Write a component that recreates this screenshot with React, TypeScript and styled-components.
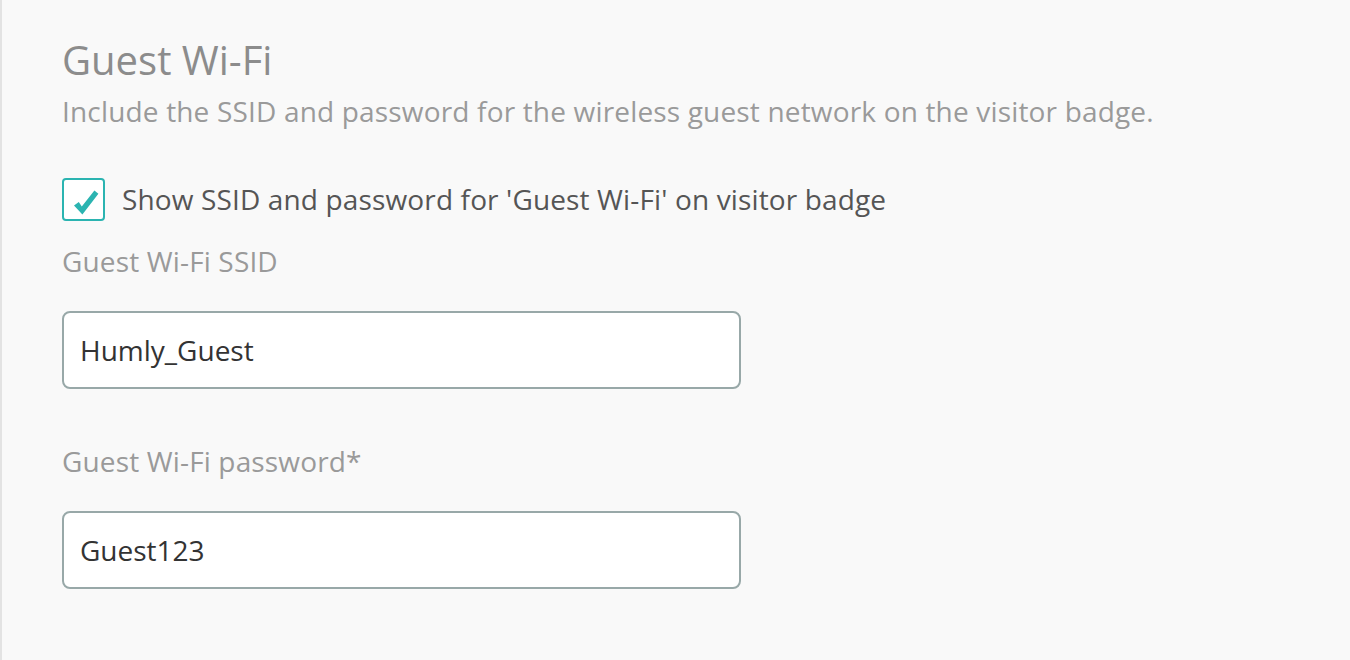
import React from "react";
import styled, { createGlobalStyle } from "styled-components";

const GlobalStyle = createGlobalStyle`
  html, body {
    margin: 0;
    padding: 0;
    background: #f9f9f9;
  }
  body {
    font-family: "Open Sans", "Noto Sans", sans-serif;
  }
  * { box-sizing: border-box; }
`;

const Page = styled.div`
  min-height: 660px;
  border-left: 2px solid #e3e3e3;
  background: #f9f9f9;
  padding: 36px 0 0 60px;
  display: flex;
  flex-direction: column;
  align-items: flex-start;
`;

const Title = styled.h2`
  margin: 0;
  font-size: 40px;
  line-height: 48px;
  font-weight: 400;
  color: #8c8c8c;
`;

const Description = styled.p`
  margin: 9px 0 0;
  font-size: 28px;
  line-height: 36px;
  letter-spacing: 0.17px;
  color: #9a9a9a;
`;

const CheckRow = styled.label`
  margin-top: 49px;
  display: flex;
  align-items: center;
  gap: 17px;
  cursor: pointer;
`;

const Box = styled.span`
  width: 43px;
  height: 43px;
  border: 2px solid #2bb4b1;
  border-radius: 4px;
  background: #ffffff;
  display: flex;
  align-items: center;
  justify-content: center;
`;

const CheckText = styled.span`
  font-size: 28px;
  line-height: 43px;
  letter-spacing: 0.14px;
  color: #555555;
`;

const Field = styled.div<{ $gap: number }>`
  margin-top: ${(p) => p.$gap}px;
  display: flex;
  flex-direction: column;
`;

const FieldLabel = styled.div`
  font-size: 28px;
  line-height: 37px;
  letter-spacing: 0.15px;
  color: #9a9a9a;
`;

const Input = styled.input`
  margin-top: 31px;
  width: 679px;
  height: 78px;
  border: 2px solid #98a8a8;
  border-radius: 8px;
  background: #ffffff;
  padding: 0 16px;
  font-family: "Open Sans", "Noto Sans", sans-serif;
  font-size: 28px;
  color: #333333;
  outline: none;
`;

export default function App() {
  return (
    <>
      <GlobalStyle />
      <Page>
        <Title>Guest Wi-Fi</Title>
        <Description>
          Include the SSID and password for the wireless guest network on the visitor badge.
        </Description>
        <CheckRow>
          <Box>
            <svg width="39" height="39" viewBox="2 2 39 39">
              <path d="M12 27.5 L16.8 24 L19.8 28.4 L32.4 12.6 L36.4 15.8 L20.4 36.6 Z" fill="#2bb4b1" />
            </svg>
          </Box>
          <CheckText>Show SSID and password for 'Guest Wi-Fi' on visitor badge</CheckText>
        </CheckRow>
        <Field $gap={22}>
          <FieldLabel>Guest Wi-Fi SSID</FieldLabel>
          <Input defaultValue="Humly_Guest" />
        </Field>
        <Field $gap={54}>
          <FieldLabel>Guest Wi-Fi password*</FieldLabel>
          <Input defaultValue="Guest123" />
        </Field>
      </Page>
    </>
  );
}
